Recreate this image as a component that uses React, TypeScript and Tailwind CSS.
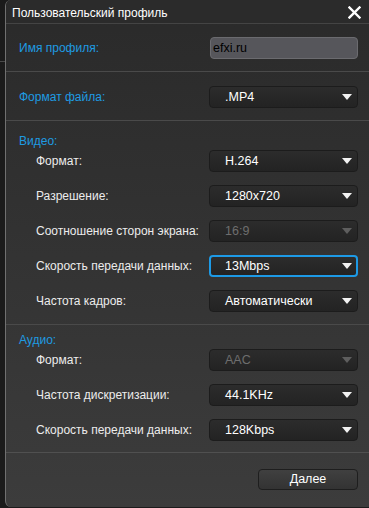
import React from 'react';

const FONT = { fontFamily: '"Liberation Sans", Arial, sans-serif' };

function Arrow({ disabled }: { disabled?: boolean }) {
  return (
    <svg width="10" height="6" viewBox="0 0 10 6" className="shrink-0">
      <path d="M0 0 H10 L5 6 Z" fill={disabled ? '#5e5e5e' : '#f2f2f2'} />
    </svg>
  );
}

function Select({ value, disabled, focused }: { value: string; disabled?: boolean; focused?: boolean }) {
  const border = focused
    ? 'border-2 border-[#1d9ae6] pl-[14px] pr-[4px]'
    : 'border border-[#1c1c1c] pl-[15px] pr-[5px]';
  return (
    <div
      className={`w-[149px] h-[22px] shrink-0 rounded-[4px] flex items-center justify-between bg-gradient-to-b from-[#2c2c2c] to-[#232323] ${border}`}
    >
      <span className={`text-[12.5px] leading-none ${disabled ? 'text-[#6e6e6e]' : 'text-white'}`}>{value}</span>
      <Arrow disabled={disabled} />
    </div>
  );
}

function Row({ label, children }: { label: string; children: React.ReactNode }) {
  return (
    <div className="flex items-center justify-between h-[22px] pl-[17px]">
      <span className="text-[12px] text-[#ececec] leading-none whitespace-nowrap">{label}</span>
      {children}
    </div>
  );
}

export default function App() {
  return (
    <div className="w-[369px] h-[508px] bg-[#1b1b1b] flex relative overflow-hidden" style={FONT}>
      {/* bits of the window behind */}
      <div className="absolute left-0 top-[61px] w-[5px] h-px bg-[#4a4a4a]" />

      <div className="ml-[5px] mt-0 w-[364px] h-[507px] flex flex-col border-l border-[#707070] rounded-bl-[6px] rounded-tl-[6px] overflow-hidden bg-gradient-to-b from-[#2a2a2a] to-[#3c3c3c]">
        {/* title bar */}
        <div className="h-[24px] shrink-0 flex items-center justify-between pl-[6px] pr-[8px] pt-[2px] bg-[#2b2b2b] border-b border-[#444]">
          <span className="text-[12px] text-white leading-none">Пользовательский профиль</span>
          <svg width="13" height="13" viewBox="0 0 13 13">
            <path d="M1.5 1.5 L11.5 11.5 M11.5 1.5 L1.5 11.5" stroke="#fff" strokeWidth="2.4" strokeLinecap="square" />
          </svg>
        </div>

        {/* profile name */}
        <div className="pt-[13px] pb-[12px] pl-[13px] pr-[11px] border-b border-[#4a4a4a]">
          <div className="flex items-center justify-between h-[22px]">
            <span className="text-[12px] text-[#1e9be2] leading-none">Имя профиля:</span>
            <div className="w-[148px] h-[22px] shrink-0 rounded-[4px] bg-[#56565b] border border-[#6b6b6f] flex items-center pl-[2px]">
              <span className="text-[12.5px] text-[#000] leading-none">efxi.ru</span>
            </div>
          </div>
        </div>

        {/* file format */}
        <div className="pt-[14px] pb-[12px] pl-[13px] pr-[11px] border-b border-[#4a4a4a]">
          <div className="flex items-center justify-between h-[22px]">
            <span className="text-[12px] text-[#1e9be2] leading-none">Формат файла:</span>
            <Select value=".MP4" />
          </div>
        </div>

        {/* video */}
        <div className="pt-[10px] pb-[12px] pl-[13px] pr-[11px] border-b border-[#4a4a4a]">
          <div className="h-[19px] flex items-center">
            <span className="text-[12px] text-[#1e9be2] leading-none">Видео:</span>
          </div>
          <div className="flex flex-col gap-[13px]">
            <Row label="Формат:"><Select value="H.264" /></Row>
            <Row label="Разрешение:"><Select value="1280x720" /></Row>
            <Row label="Соотношение сторон экрана:"><Select value="16:9" disabled /></Row>
            <Row label="Скорость передачи данных:"><Select value="13Mbps" focused /></Row>
            <Row label="Частота кадров:"><Select value="Автоматически" /></Row>
          </div>
        </div>

        {/* audio */}
        <div className="pt-[6px] pb-[11px] pl-[13px] pr-[11px] border-b border-[#505050]">
          <div className="h-[18px] flex items-center">
            <span className="text-[12px] text-[#1e9be2] leading-none">Аудио:</span>
          </div>
          <div className="flex flex-col gap-[13px]">
            <Row label="Формат:"><Select value="AAC" disabled /></Row>
            <Row label="Частота дискретизации:"><Select value="44.1KHz" /></Row>
            <Row label="Скорость передачи данных:"><Select value="128Kbps" /></Row>
          </div>
        </div>

        {/* footer */}
        <div className="flex justify-end pt-[16px] pr-[11px]">
          <button className="w-[100px] h-[21px] rounded-[4px] border border-[#1e1e1e] bg-gradient-to-b from-[#404040] to-[#333] text-[12.5px] text-white leading-none">
            Далее
          </button>
        </div>
      </div>
    </div>
  );
}
